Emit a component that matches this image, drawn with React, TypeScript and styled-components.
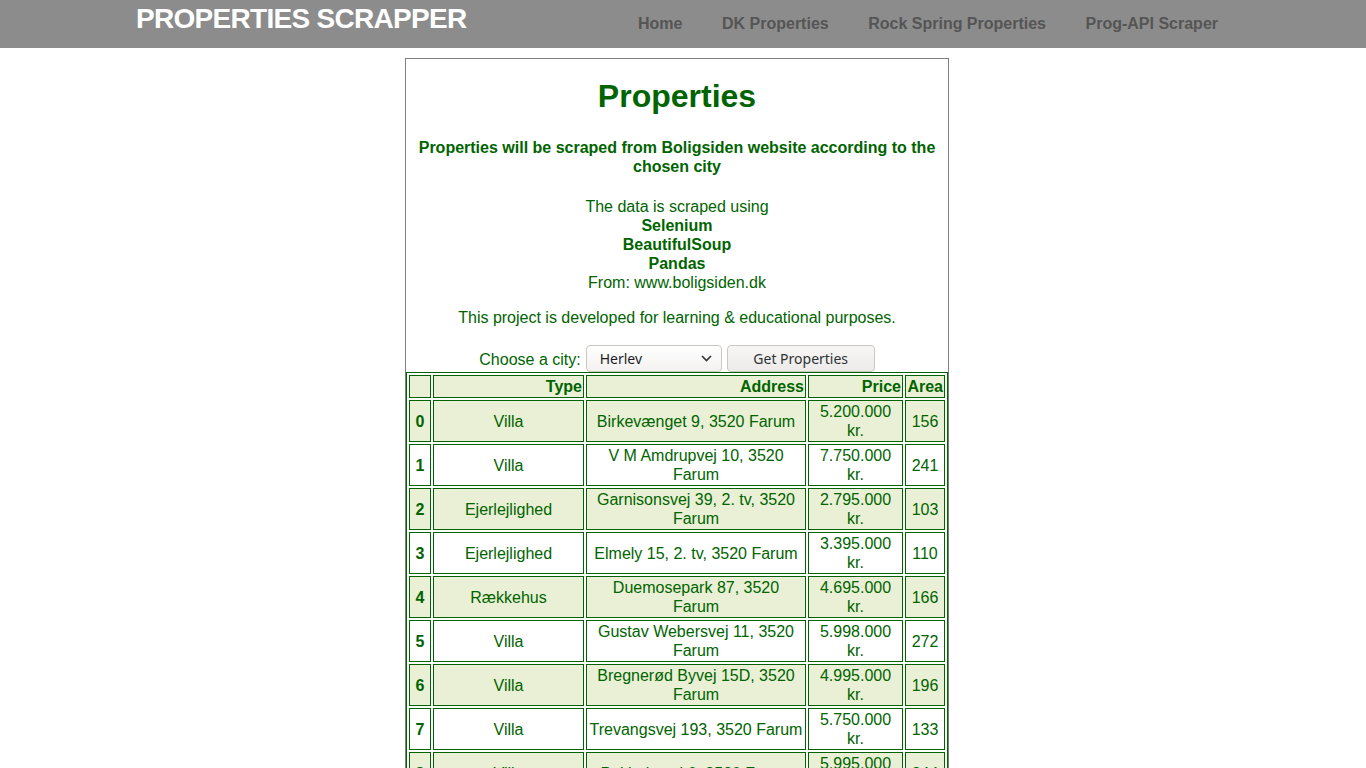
import React from "react";
import styled, { createGlobalStyle } from "styled-components";

const GREEN = "#006400";
const ROW_BG = "#eaf0d5";

const Global = createGlobalStyle`
  html, body { margin: 0; padding: 0; background: #ffffff; }
  body { font-family: "Liberation Sans", Arial, sans-serif; font-size: 16px; }
  * { box-sizing: border-box; }
`;

const NavBar = styled.header`
  height: 48px;
  background: #8c8c8c;
  display: flex;
  align-items: flex-start;
  padding: 0 148px 0 136px;
`;

const Brand = styled.div`
  margin-top: 3px;
  color: #ffffff;
  font-weight: bold;
  font-size: 28px;
  letter-spacing: -0.7px;
  line-height: normal;
`;

const NavLinks = styled.nav`
  margin-left: auto;
  display: flex;
  gap: 39.5px;
  padding-top: 14px;
`;

const NavLink = styled.a`
  color: #555555;
  font-weight: bold;
  font-size: 16px;
  line-height: 19px;
  text-decoration: none;
`;

const Card = styled.main`
  width: 544px;
  margin: 10px 0 0 405px;
  border: 1px solid #808080;
  display: flex;
  flex-direction: column;
  align-items: stretch;
  color: ${GREEN};
  text-align: center;
  line-height: 19px;
`;

const Title = styled.h1`
  margin: 19px 0 0;
  font-size: 32px;
  line-height: 37px;
  font-weight: bold;
`;

const Lead = styled.h4`
  margin: 23px 8px 0;
  font-size: 16px;
  line-height: 19px;
  font-weight: bold;
`;

const Block = styled.p<{ $top: number }>`
  margin: ${(p) => p.$top}px 0 0;
`;

const Strong = styled.b`
  display: block;
`;

const FormRow = styled.div`
  margin-top: 18px;
  display: flex;
  justify-content: center;
  align-items: center;
  gap: 5px;
  height: 27px;
`;

const Label = styled.label`
  font-size: 16px;
  margin-top: 1px;
`;

const SelectWrap = styled.div`
  position: relative;
  width: 136px;
  height: 27px;
`;

const Select = styled.select`
  appearance: none;
  width: 100%;
  height: 100%;
  border: 1px solid #cdc7c2;
  border-radius: 4px;
  background: linear-gradient(#ffffff, #f3f2f1);
  font-family: "Noto Sans", "Open Sans", sans-serif;
  font-size: 14px;
  color: #1c1c28;
  padding: 0 0 0 13px;
  outline: none;
`;

const Chevron = styled.svg`
  position: absolute;
  right: 10px;
  top: 10px;
  pointer-events: none;
`;

const Button = styled.button`
  width: 148px;
  height: 27px;
  border: 1px solid #cdc7c2;
  border-radius: 4px;
  background: linear-gradient(#f7f6f5, #edebe9);
  font-family: "Noto Sans", "Open Sans", sans-serif;
  font-size: 14px;
  color: #2e3436;
  padding: 0;
`;

const Table = styled.table`
  width: 542px;
  border: 1px solid ${GREEN};
  border-spacing: 2px;
  table-layout: fixed;
  background: #ffffff;
  line-height: 19px;
  font-size: 16px;
`;

const Row = styled.tr<{ $shade: boolean }>`
  background: ${(p) => (p.$shade ? ROW_BG : "#ffffff")};
`;

const HeadCell = styled.th<{ $w: number }>`
  width: ${(p) => p.$w}px;
  border: 1px solid ${GREEN};
  padding: 1px;
  text-align: right;
  font-weight: bold;
`;

const IndexCell = styled.th`
  border: 1px solid ${GREEN};
  padding: 1px;
  text-align: center;
  font-weight: bold;
`;

const Cell = styled.td`
  border: 1px solid ${GREEN};
  padding: 1px;
  text-align: center;
  height: 42px;
`;

type Prop = [string, string, string, number];

const base: Prop[] = [
  ["Villa", "Birkevænget 9, 3520 Farum", "5.200.000 kr.", 156],
  ["Villa", "V M Amdrupvej 10, 3520 Farum", "7.750.000 kr.", 241],
  ["Ejerlejlighed", "Garnisonsvej 39, 2. tv, 3520 Farum", "2.795.000 kr.", 103],
  ["Ejerlejlighed", "Elmely 15, 2. tv, 3520 Farum", "3.395.000 kr.", 110],
  ["Rækkehus", "Duemosepark 87, 3520 Farum", "4.695.000 kr.", 166],
  ["Villa", "Gustav Webersvej 11, 3520 Farum", "5.998.000 kr.", 272],
  ["Villa", "Bregnerød Byvej 15D, 3520 Farum", "4.995.000 kr.", 196],
  ["Villa", "Trevangsvej 193, 3520 Farum", "5.750.000 kr.", 133],
  ["Villa", "Paltholmvej 6, 3520 Farum", "5.995.000 kr.", 244],
];

const streets = [
  "Ryetvej", "Farum Hovedgade", "Stavnsholtvej", "Bregnerødvej", "Nygårdsvej",
  "Ny Hammersholtvej", "Kirke Værløsevej", "Frederiksborgvej", "Lillevangsvej",
  "Rugvænget", "Søndersøvej", "Skovvej", "Gammelgårdsvej", "Fiskebæk",
  "Hvedevænget", "Birkeholmvej", "Åbakkevej", "Vestervej",
];
const types = ["Villa", "Rækkehus", "Ejerlejlighed", "Villa", "Fritidsbolig", "Villa"];

const extra: Prop[] = Array.from({ length: 48 }, (_, i) => {
  const t = types[i % types.length];
  const s = streets[(i * 7) % streets.length];
  const n = 3 + ((i * 13) % 97);
  const mill = 2 + ((i * 3) % 6);
  const thou = ((i * 37) % 10) * 100 + 95;
  const price = `${mill}.${String(thou).padStart(3, "0")}.000 kr.`;
  const area = 70 + ((i * 29) % 190);
  return [t, `${s} ${n}, 3520 Farum`, price, area];
});

const rows = [...base, ...extra];

export default function App() {
  return (
    <>
      <Global />
      <NavBar>
        <Brand>PROPERTIES SCRAPPER</Brand>
        <NavLinks>
          <NavLink href="#">Home</NavLink>
          <NavLink href="#">DK Properties</NavLink>
          <NavLink href="#">Rock Spring Properties</NavLink>
          <NavLink href="#">Prog-API Scraper</NavLink>
        </NavLinks>
      </NavBar>
      <Card>
        <Title>Properties</Title>
        <Lead>Properties will be scraped from Boligsiden website according to the chosen city</Lead>
        <Block $top={21}>
          The data is scraped using
          <Strong>Selenium</Strong>
          <Strong>BeautifulSoup</Strong>
          <Strong>Pandas</Strong>
          From: www.boligsiden.dk
        </Block>
        <Block $top={16}>This project is developed for learning &amp; educational purposes.</Block>
        <FormRow>
          <Label>Choose a city:</Label>
          <SelectWrap>
            <Select defaultValue="Herlev">
              <option>Herlev</option>
              <option>Farum</option>
              <option>Ballerup</option>
            </Select>
            <Chevron width="11" height="7" viewBox="0 0 11 7">
              <path d="M1 1l4.5 4.5L10 1" fill="none" stroke="#333" strokeWidth="1.6" />
            </Chevron>
          </SelectWrap>
          <Button>Get Properties</Button>
        </FormRow>
        <Table>
          <thead>
            <Row $shade>
              <HeadCell $w={22}></HeadCell>
              <HeadCell $w={151}>Type</HeadCell>
              <HeadCell $w={220}>Address</HeadCell>
              <HeadCell $w={95}>Price</HeadCell>
              <HeadCell $w={40}>Area</HeadCell>
            </Row>
          </thead>
          <tbody>
            {rows.map((r, i) => (
              <Row key={i} $shade={i % 2 === 0}>
                <IndexCell>{i}</IndexCell>
                <Cell>{r[0]}</Cell>
                <Cell>{r[1]}</Cell>
                <Cell>{r[2]}</Cell>
                <Cell>{r[3]}</Cell>
              </Row>
            ))}
          </tbody>
        </Table>
      </Card>
    </>
  );
}
